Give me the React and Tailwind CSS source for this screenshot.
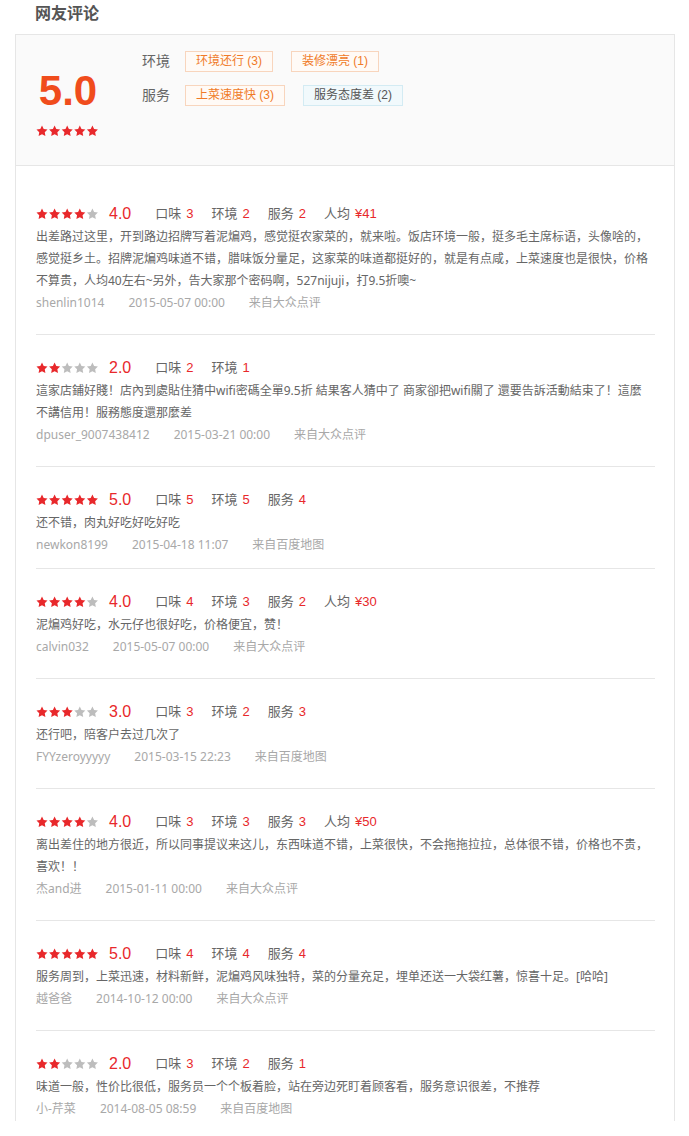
import React from "react";

const STAR = "M12 2l3.09 6.26L22 9.27l-5 4.87 1.18 6.88L12 17.77l-6.18 3.25L7 14.14 2 9.27l6.91-1.01L12 2z";

function Stars({ n }) {
  return (
    <svg width="64" height="12" viewBox="0 0 64 12" className="block">
      {[0, 1, 2, 3, 4].map((i) => (
        <g key={i} transform={`translate(${i * 12.6 - 0.6},-0.6) scale(0.55)`}>
          <path d={STAR} fill={i < n ? "#e8282b" : "#bdbdbd"} />
        </g>
      ))}
    </svg>
  );
}

const reviews = [
  {
    s: 4, score: "4.0",
    items: [["口味", "3"], ["环境", "2"], ["服务", "2"], ["人均", "¥41"]],
    text: "出差路过这里，开到路边招牌写着泥煸鸡，感觉挺农家菜的，就来啦。饭店环境一般，挺多毛主席标语，头像啥的，感觉挺乡土。招牌泥煸鸡味道不错，腊味饭分量足，这家菜的味道都挺好的，就是有点咸，上菜速度也是很快，价格不算贵，人均40左右~另外，告大家那个密码啊，527nijuji，打9.5折噢~",
    user: "shenlin1014", date: "2015-05-07 00:00", src: "来自大众点评",
  },
  {
    s: 2, score: "2.0",
    items: [["口味", "2"], ["环境", "1"]],
    text: "這家店鋪好賤！店內到處貼住猜中wifi密碼全單9.5折 結果客人猜中了 商家卻把wifi關了 還要告訴活動結束了！這麼不講信用！服務態度還那麼差",
    user: "dpuser_9007438412", date: "2015-03-21 00:00", src: "来自大众点评",
  },
  {
    s: 5, score: "5.0",
    items: [["口味", "5"], ["环境", "5"], ["服务", "4"]],
    text: "还不错，肉丸好吃好吃好吃",
    user: "newkon8199", date: "2015-04-18 11:07", src: "来自百度地图",
    pb: "pb-[12px]",
  },
  {
    s: 4, score: "4.0",
    items: [["口味", "4"], ["环境", "3"], ["服务", "2"], ["人均", "¥30"]],
    text: "泥煸鸡好吃，水元仔也很好吃，价格便宜，赞！",
    user: "calvin032", date: "2015-05-07 00:00", src: "来自大众点评",
  },
  {
    s: 3, score: "3.0",
    items: [["口味", "3"], ["环境", "2"], ["服务", "3"]],
    text: "还行吧，陪客户去过几次了",
    user: "FYYzeroyyyyy", date: "2015-03-15 22:23", src: "来自百度地图",
  },
  {
    s: 4, score: "4.0",
    items: [["口味", "3"], ["环境", "3"], ["服务", "3"], ["人均", "¥50"]],
    text: "离出差住的地方很近，所以同事提议来这儿，东西味道不错，上菜很快，不会拖拖拉拉，总体很不错，价格也不贵，喜欢！！",
    user: "杰and进", date: "2015-01-11 00:00", src: "来自大众点评",
  },
  {
    s: 5, score: "5.0",
    items: [["口味", "4"], ["环境", "4"], ["服务", "4"]],
    text: "服务周到，上菜迅速，材料新鲜，泥煸鸡风味独特，菜的分量充足，埋单还送一大袋红薯，惊喜十足。[哈哈]",
    user: "越爸爸", date: "2014-10-12 00:00", src: "来自大众点评",
  },
  {
    s: 2, score: "2.0",
    items: [["口味", "3"], ["环境", "2"], ["服务", "1"]],
    text: "味道一般，性价比很低，服务员一个个板着脸，站在旁边死盯着顾客看，服务意识很差，不推荐",
    user: "小-芹菜", date: "2014-08-05 08:59", src: "来自百度地图",
    last: true,
  },
];

const font = { fontFamily: '"Liberation Sans", "Noto Sans CJK SC", sans-serif' };
const bodyFont = { fontFamily: '"Noto Sans", "Noto Sans CJK SC", sans-serif' };

function Tag({ children, blue }) {
  return (
    <span
      className={
        "inline-block h-[21px] px-[10px] border text-[12px] leading-[19px] overflow-hidden " +
        (blue
          ? "border-[#d3ebf3] bg-[#f1f9fc] text-[#555]"
          : "border-[#f8d5bd] bg-[#fffaf6] text-[#f07a28]")
      }
    >
      {children}
    </span>
  );
}

function Review({ r, first }) {
  return (
    <div
      className={
        "pt-[23px] " +
        (r.last ? "pb-[1px] " : (r.pb || "pb-[20px]") + " border-b border-[#e6e6e6] ") +
        (first ? "mt-[15px]" : "")
      }
    >
      <div className="flex items-center h-[20px]">
        <Stars n={r.s} />
        <span className="ml-[9px] h-[20px] text-[16px] leading-[20px] text-[#e8282b]">{r.score}</span>
        <div className="ml-[24px] h-[20px] flex items-center gap-[18px] text-[13px] leading-[20px]">
          {r.items.map(([k, v]) => (
            <span key={k} className="h-[20px] text-[#666]">
              {k}
              <span className="ml-[5px] text-[#e8282b]">{v}</span>
            </span>
          ))}
        </div>
      </div>
      <p className="mt-[2px] max-w-[616px] text-[12px] leading-[22px] text-[#666]" style={bodyFont}>
        {r.text}
      </p>
      <div className="flex h-[22px] gap-[24px] text-[12px] leading-[22px] text-[#a8a8a8]" style={bodyFont}>
        <span className="h-[22px]">{r.user}</span>
        <span className="h-[22px]">{r.date}</span>
        <span className="h-[22px]">{r.src}</span>
      </div>
    </div>
  );
}

export default function App() {
  return (
    <div className="w-[689px] bg-white" style={font}>
      <div className="h-[34px] pt-[5px] pl-[35px] text-[16px] leading-[18px] font-bold text-[#555]">
        网友评论
      </div>
      <div className="ml-[15px] w-[660px] border-t border-l border-r border-[#e6e6e6]">
        <div className="h-[131px] box-border bg-[#fafafa] border-b border-[#e6e6e6] pt-[16px] pl-[20px] flex items-start">
          <div className="w-[64px] mt-[19px] flex flex-col items-center">
            <div className="h-[42px] text-[42px] leading-[42px] font-bold text-[#f04c1c]">5.0</div>
            <div className="mt-[13px]">
              <Stars n={5} />
            </div>
          </div>
          <div className="ml-[42px] flex flex-col gap-[13px]">
            <div className="flex items-center h-[21px]">
              <span className="w-[43px] h-[21px] text-[14px] leading-[21px] text-[#666]">环境</span>
              <Tag>环境还行 (3)</Tag>
              <span className="ml-[18px] h-[21px]">
                <Tag>装修漂亮 (1)</Tag>
              </span>
            </div>
            <div className="flex items-center h-[21px]">
              <span className="w-[43px] h-[21px] text-[14px] leading-[21px] text-[#666]">服务</span>
              <Tag>上菜速度快 (3)</Tag>
              <span className="ml-[18px] h-[21px]">
                <Tag blue>服务态度差 (2)</Tag>
              </span>
            </div>
          </div>
        </div>
        <div className="pl-[20px] pr-[19px]">
          {reviews.map((r, i) => (
            <Review key={i} r={r} first={i === 0} />
          ))}
        </div>
      </div>
    </div>
  );
}
